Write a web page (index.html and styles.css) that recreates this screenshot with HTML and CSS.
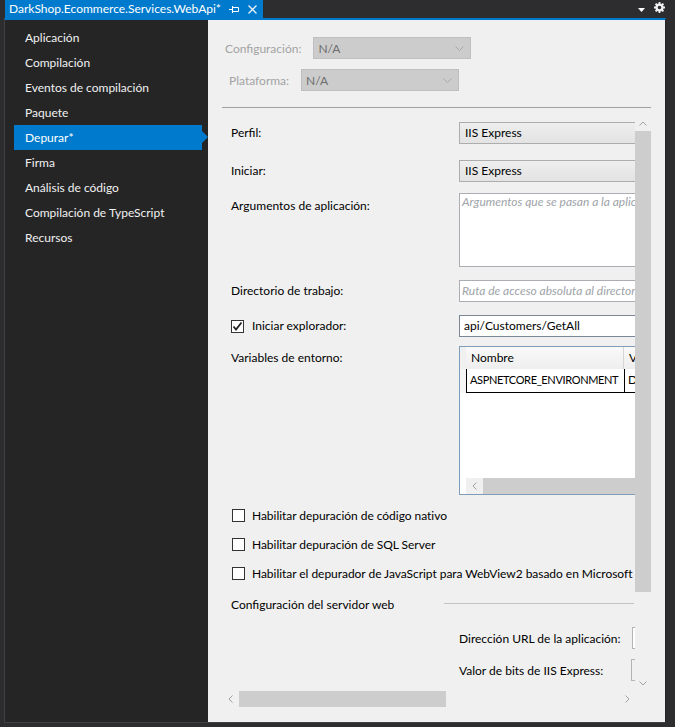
FILE: index.html
```html
<!DOCTYPE html>
<html lang="es">
<head>
<meta charset="utf-8">
<title>DarkShop.Ecommerce.Services.WebApi</title>
<link rel="stylesheet" href="styles.css">
</head>
<body>
<div class="tabbar">
  <div class="tab">
    <span class="tab-title">DarkShop.Ecommerce.Services.WebApi*</span>
    <svg class="pin" width="10" height="8" viewBox="0 0 10 8"><path d="M0 4.5H3.5M3.5 1V8M3.5 2.5H9.5V6.5H3.5" fill="none" stroke="#ffffff" stroke-width="1"/></svg>
    <svg class="close" width="9" height="9" viewBox="0 0 9 9"><path d="M0.5 0.5L8.5 8.5M8.5 0.5L0.5 8.5" fill="none" stroke="#e8f2fa" stroke-width="1.3"/></svg>
  </div>
  <div class="tab-tools">
    <svg class="tools-drop" width="7" height="4" viewBox="0 0 7 4"><path d="M0 0H7L3.5 4Z" fill="#ffffff"/></svg>
    <svg class="tools-gear" width="11" height="11" viewBox="0 0 12 12"><path fill="#f1f1f1" fill-rule="evenodd" d="M5 0H7V1.6L8.3 2.1L9.5 1L11 2.5L9.9 3.7L10.4 5H12V7H10.4L9.9 8.3L11 9.5L9.5 11L8.3 9.9L7 10.4V12H5V10.4L3.7 9.9L2.5 11L1 9.5L2.1 8.3L1.6 7H0V5H1.6L2.1 3.7L1 2.5L2.5 1L3.7 2.1L5 1.6ZM6 4A2 2 0 1 0 6 8A2 2 0 1 0 6 4Z"/></svg>
  </div>
</div>
<div class="frame">
  <nav class="sidenav">
    <div class="nav-item">Aplicación</div>
    <div class="nav-item">Compilación</div>
    <div class="nav-item">Eventos de compilación</div>
    <div class="nav-item">Paquete</div>
    <div class="nav-item active">Depurar*</div>
    <div class="nav-item">Firma</div>
    <div class="nav-item">Análisis de código</div>
    <div class="nav-item">Compilación de TypeScript</div>
    <div class="nav-item">Recursos</div>
  </nav>
  <main class="page">
    <div class="config">
      <div class="config-row config-row-a">
        <span class="config-label">Configuración:</span>
        <div class="select-disabled"><span>N/A</span><svg class="chev" width="9" height="5" viewBox="0 0 9 5"><path d="M0.5 0.5L4.5 4.5L8.5 0.5" fill="none" stroke="#a9a9a9" stroke-width="1"/></svg></div>
      </div>
      <div class="config-row config-row-b">
        <span class="config-label">Plataforma:</span>
        <div class="select-disabled"><span>N/A</span><svg class="chev" width="9" height="5" viewBox="0 0 9 5"><path d="M0.5 0.5L4.5 4.5L8.5 0.5" fill="none" stroke="#a9a9a9" stroke-width="1"/></svg></div>
      </div>
    </div>
    <div class="separator"></div>
    <div class="scroller">
      <div class="viewport">
        <div class="form">
          <div class="row row-perfil">
            <label class="label">Perfil:</label>
            <div class="dropdown">IIS Express</div>
          </div>
          <div class="row row-iniciar">
            <label class="label">Iniciar:</label>
            <div class="dropdown">IIS Express</div>
          </div>
          <div class="row row-args row-top">
            <label class="label label-top">Argumentos de aplicación:</label>
            <div class="textarea"><span class="placeholder">Argumentos que se pasan a la aplicación</span></div>
          </div>
          <div class="row row-dir">
            <label class="label">Directorio de trabajo:</label>
            <div class="textbox"><span class="placeholder">Ruta de acceso absoluta al directorio de trabajo</span></div>
          </div>
          <div class="row row-browser">
            <label class="label check-label"><span class="checkbox checked"><svg width="11" height="11" viewBox="0 0 11 11"><path d="M1.5 5.5L4 8.5L9.5 1.5" fill="none" stroke="#222222" stroke-width="1.8"/></svg></span>Iniciar explorador:</label>
            <div class="textbox textbox-active">api/Customers/GetAll</div>
          </div>
          <div class="row row-env row-top">
            <label class="label label-top label-env">Variables de entorno:</label>
            <div class="grid">
              <div class="grid-head">
                <div class="grid-rowhead"></div>
                <div class="grid-col grid-col-name">Nombre</div>
                <div class="grid-col">Valor</div>
              </div>
              <div class="grid-data">
                <div class="grid-rowhead grid-rowhead-data"></div>
                <div class="grid-cell grid-cell-name">ASPNETCORE_ENVIRONMENT</div>
                <div class="grid-cell">Development</div>
              </div>
              <div class="grid-fill"></div>
              <div class="grid-hscroll">
                <div class="grid-hscroll-arrow"><svg width="5" height="8" viewBox="0 0 5 8"><path d="M4.5 0.5L1 4L4.5 7.5" fill="none" stroke="#a0a0a0" stroke-width="1"/></svg></div>
                <div class="grid-hscroll-thumb"></div>
              </div>
            </div>
          </div>
          <div class="option option-first">
            <span class="checkbox"></span><span>Habilitar depuración de código nativo</span>
          </div>
          <div class="option">
            <span class="checkbox"></span><span>Habilitar depuración de SQL Server</span>
          </div>
          <div class="option">
            <span class="checkbox"></span><span>Habilitar el depurador de JavaScript para WebView2 basado en Microsoft Edge</span>
          </div>
          <div class="section">
            <span class="section-title">Configuración del servidor web</span>
            <span class="section-line"></span>
          </div>
          <div class="server-row server-row-url">
            <span class="server-label">Dirección URL de la aplicación:</span>
            <div class="server-box"></div>
          </div>
          <div class="server-row server-row-bits">
            <span class="server-label">Valor de bits de IIS Express:</span>
            <div class="server-box server-box-select"></div>
          </div>
        </div>
      </div>
      <div class="vscroll">
        <div class="sb-arrow"><svg width="8" height="5" viewBox="0 0 8 5"><path d="M0.5 4.5L4 1L7.5 4.5" fill="none" stroke="#a0a0a0" stroke-width="1"/></svg></div>
        <div class="vscroll-thumb"></div>
        <div class="sb-track"></div>
        <div class="sb-arrow"><svg width="8" height="5" viewBox="0 0 8 5"><path d="M0.5 0.5L4 4L7.5 0.5" fill="none" stroke="#a0a0a0" stroke-width="1"/></svg></div>
      </div>
      <div class="hscroll">
        <div class="sb-arrow"><svg width="5" height="8" viewBox="0 0 5 8"><path d="M4.5 0.5L1 4L4.5 7.5" fill="none" stroke="#a0a0a0" stroke-width="1"/></svg></div>
        <div class="hscroll-thumb"></div>
        <div class="sb-track"></div>
        <div class="sb-arrow"><svg width="5" height="8" viewBox="0 0 5 8"><path d="M0.5 0.5L4 4L0.5 7.5" fill="none" stroke="#a0a0a0" stroke-width="1"/></svg></div>
      </div>
      <div class="corner"></div>
    </div>
  </main>
</div>
</body>
</html>
```
FILE: styles.css
```css
* { box-sizing: border-box; }
html, body { margin: 0; padding: 0; }
body {
  width: 675px;
  height: 727px;
  overflow: hidden;
  background: #2d2d30;
  font-family: Lato, "Segoe UI", "Noto Sans", sans-serif;
  font-size: 12px;
  color: #000000;
}

/* Tab bar */
.tabbar {
  display: flex;
  height: 18px;
  padding-left: 5px;
}
.tab {
  display: flex;
  align-items: center;
  width: 258px;
  padding-left: 4px;
  background: #007acc;
  color: #ffffff;
}
.tab-title { line-height: 18px; white-space: nowrap; }
.pin { margin-left: auto; margin-right: 9px; }
.close { margin-right: 6px; }
.tab-tools {
  display: flex;
  align-items: center;
  margin-left: auto;
  padding-right: 10px;
  gap: 9px;
}
.tools-drop { margin-top: 1px; }
.tools-gear { margin-top: -3px; }

/* Frame */
.frame {
  display: flex;
  width: 662px;
  height: 705px;
  margin-left: 4px;
  border-top: 2px solid #007acc;
  border-left: 1px solid #3f3f46;
  border-bottom: 1px solid #3f3f46;
  border-right: 1px solid #252526;
}

/* Side navigation */
.sidenav {
  width: 203px;
  flex: none;
  background: #252526;
  padding-top: 5px;
}
.nav-item {
  position: relative;
  height: 25px;
  line-height: 25px;
  margin-left: 9px;
  width: 188px;
  padding-left: 11px;
  color: #f1f1f1;
  white-space: nowrap;
}
.nav-item.active { background: #007acc; color: #ffffff; }
.nav-item.active::after {
  content: "";
  position: absolute;
  right: -6px;
  top: 6px;
  border-top: 6.5px solid transparent;
  border-bottom: 6.5px solid transparent;
  border-left: 6px solid #007acc;
}

/* Page */
.page {
  flex: 1;
  background: #f0f0f0;
  padding-left: 14px;
}
.config {
  display: flex;
  flex-direction: column;
  gap: 10px;
  padding-top: 17px;
}
.config-row {
  display: flex;
  align-items: center;
  gap: 12px;
  height: 22px;
  color: #a3a3a3;
}
.config-row-a { padding-left: 3px; }
.config-row-b { padding-left: 7px; }
.select-disabled {
  display: flex;
  align-items: center;
  justify-content: space-between;
  width: 158px;
  height: 22px;
  padding: 0 6px 0 4px;
  background: #cccccc;
  border: 1px solid #bfbfbf;
  color: #6e6e6e;
}
.separator {
  width: 429px;
  height: 1px;
  margin-top: 16px;
  background: #a0a0a0;
}

/* Scroller */
.scroller {
  display: grid;
  grid-template-columns: 413px 16px;
  grid-template-rows: 576px 16px;
  width: 429px;
  margin-top: 7px;
}
.viewport {
  overflow: hidden;
}
.vscroll {
  display: flex;
  flex-direction: column;
}
.hscroll {
  display: flex;
}
.sb-arrow {
  width: 16px;
  height: 16px;
  flex: none;
  display: flex;
  align-items: center;
  justify-content: center;
}
.sb-track { flex: 1; }
.vscroll-thumb { height: 461px; background: #cdcdcd; flex: none; }
.hscroll-thumb { width: 207px; margin-left: 1px; background: #cdcdcd; flex: none; }

/* Form */
.form {
  width: 560px;
  padding: 7px 0 0 9px;
}
.row {
  display: flex;
  align-items: center;
}
.row-top { align-items: flex-start; }
.label {
  width: 228px;
  flex: none;
  line-height: 16px;
  white-space: nowrap;
}
.label-top { padding-top: 5px; }
.label-env { padding-top: 4px; }
.row-iniciar { margin-top: 16px; }
.row-args { margin-top: 11px; }
.row-dir { margin-top: 13px; }
.row-browser { margin-top: 13px; }
.row-env { margin-top: 9px; }

.dropdown {
  width: 320px;
  height: 22px;
  line-height: 20px;
  padding-left: 5px;
  border: 1px solid #adadad;
  background: linear-gradient(#eeeeee, #e3e3e3);
}
.textarea {
  width: 320px;
  height: 74px;
  padding: 0 2px;
  line-height: 16px;
  background: #ffffff;
  border: 1px solid #abadb3;
}
.textbox {
  width: 320px;
  height: 22px;
  line-height: 20px;
  padding-left: 2px;
  background: #ffffff;
  border: 1px solid #abadb3;
  white-space: nowrap;
}
.textbox-active { border-color: #7a8796; padding-left: 4px; }
.placeholder {
  font-style: italic;
  color: #9ea3a8;
  white-space: nowrap;
}
.check-label {
  display: flex;
  align-items: center;
  gap: 8px;
}
.checkbox {
  display: inline-flex;
  align-items: center;
  justify-content: center;
  width: 13px;
  height: 13px;
  flex: none;
  background: #ffffff;
  border: 1px solid #333333;
}

/* Environment grid */
.grid {
  display: flex;
  flex-direction: column;
  width: 320px;
  height: 149px;
  background: #ffffff;
  border: 1px solid #7f9db9;
}
.grid-head {
  display: flex;
  height: 22px;
  background: linear-gradient(#f9f9f9, #eeeeee);
}
.grid-rowhead { width: 6px; flex: none; background: #f0f0f0; }
.grid-col {
  padding-left: 5px;
  line-height: 22px;
  border-right: 1px solid #d5d5d5;
}
.grid-col-name { width: 158px; flex: none; }
.grid-data {
  display: flex;
  height: 24px;
}
.grid-rowhead-data { background: #f6f6f6; }
.grid-cell {
  line-height: 22px;
  padding-left: 3px;
  border-bottom: 1px solid #000000;
  border-left: 1px solid #000000;
  white-space: nowrap;
  overflow: hidden;
}
.grid-cell-name {
  width: 158px;
  flex: none;
  padding-left: 3px;
  font-size: 11px;
  letter-spacing: -0.35px;
}
.grid-cell + .grid-cell { flex: 1; }
.grid-fill { flex: 1; }
.grid-hscroll {
  display: flex;
  height: 16px;
  margin-left: 6px;
  background: #f0f0f0;
}
.grid-hscroll-arrow {
  width: 17px;
  flex: none;
  display: flex;
  align-items: center;
  justify-content: center;
}
.grid-hscroll-thumb { flex: 1; background: #cdcdcd; }

/* Options */
.option {
  display: flex;
  align-items: center;
  gap: 7px;
  height: 20px;
  margin-top: 9px;
  padding-left: 1px;
  white-space: nowrap;
  letter-spacing: -0.04px;
}
.option-first { margin-top: 10px; }
.section {
  display: flex;
  align-items: center;
  height: 20px;
  margin-top: 11px;
}
.section-title { width: 213px; flex: none; white-space: nowrap; }
.section-line { width: 190px; height: 1px; background: #c3c3c3; margin-top: -1px; }
.server-row {
  display: flex;
  align-items: center;
  height: 22px;
  padding-left: 228px;
}
.server-row-url { margin-top: 13px; }
.server-row-bits { margin-top: 10px; }
.server-label { width: 173px; flex: none; white-space: nowrap; }
.server-box {
  width: 40px;
  height: 22px;
  background: #ffffff;
  border: 1px solid #b4b4b4;
}
.server-box-select { margin-left: -1px; background: #f0f0f0; }
```
